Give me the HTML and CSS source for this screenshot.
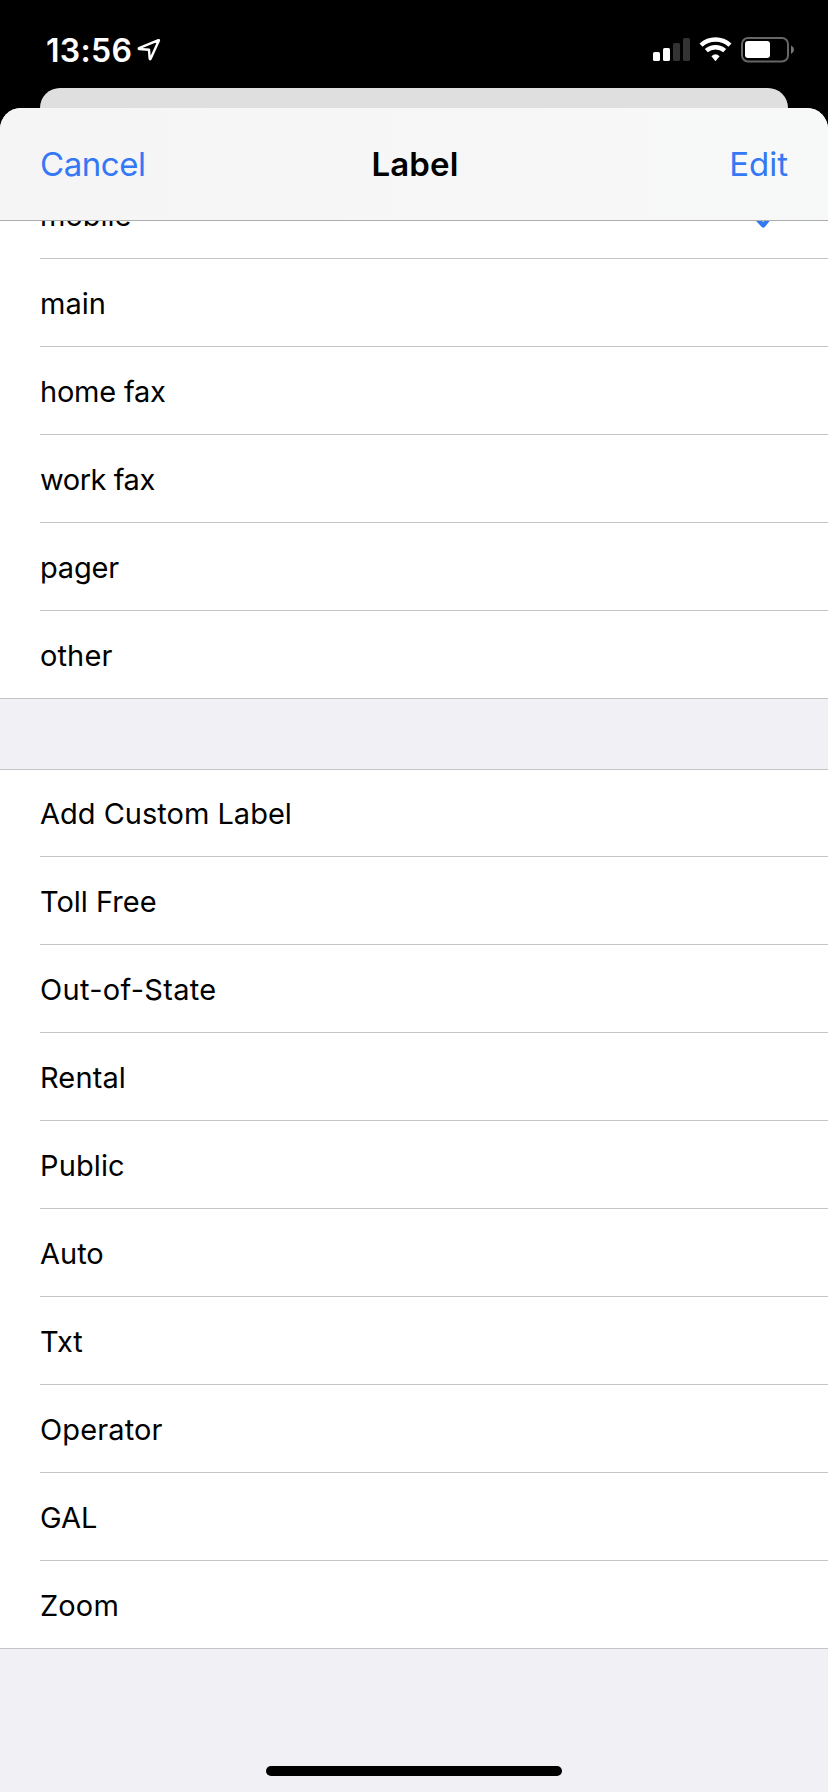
FILE: index.html
```html
<!DOCTYPE html>
<html lang="en">
<head>
<meta charset="utf-8">
<title>Label</title>
<link rel="stylesheet" href="styles.css">
</head>
<body>
<div class="screen">
  <header class="status">
    <div class="status-left">
      <span class="time">13:56</span>
      <svg class="location" width="24" height="24" viewBox="0 0 24 24"><path d="M21.5 2.2 L2 10.2 Q1.3 10.8 2.2 11 L12 11.7 L12.7 20.8 Q13 21.9 13.6 20.8 L21.9 2.6 Q22 2 21.5 2.2Z"/></svg>
    </div>
    <div class="status-right">
      <svg class="signal" width="38" height="24" viewBox="0 0 38 24"><rect x="0" y="14" width="7" height="9" rx="1.6"/><rect x="10" y="10" width="7" height="13" rx="1.6"/><rect class="off" x="20" y="5" width="7" height="18" rx="1.6"/><rect class="off" x="30" y="0" width="7" height="23" rx="1.6"/></svg>
      <svg class="wifi" width="33" height="26" viewBox="0 0 33 26"><path d="M2 8.1 A21.9 21.9 0 0 1 31 8.1" class="arc"/><path d="M7.3 13.6 A14.3 14.3 0 0 1 25.7 13.6" class="arc"/><path class="dot" d="M16.5 24.2 L12.4 19.2 Q16.5 15.4 20.6 19.2Z"/></svg>
      <svg class="battery" width="53" height="26" viewBox="0 0 53 26"><rect class="shell" x="1" y="1" width="46" height="23.5" rx="6"/><rect class="charge" x="4" y="4" width="25" height="17" rx="3"/><path class="cap" d="M50 8.5 Q53 10 53 12.7 Q53 15.4 50 17Z"/></svg>
    </div>
  </header>
  <div class="back-card"></div>
  <main class="sheet">
    <nav class="nav">
      <a class="action cancel">Cancel</a>
      <h1 class="title">Label</h1>
      <a class="action edit">Edit</a>
    </nav>
    <div class="scroller">
      <ul class="group first">
        <li class="row"><span>mobile</span><svg class="check" width="28" height="28" viewBox="0 0 28 28"><path d="M5 11.7 L13.3 20.4 L26 4.7"/></svg></li>
        <li class="row"><span>main</span></li>
        <li class="row snug"><span>home fax</span></li>
        <li class="row tight"><span>work fax</span></li>
        <li class="row snug"><span>pager</span></li>
        <li class="row loose"><span>other</span></li>
      </ul>
      <ul class="group custom">
        <li class="row"><span>Add Custom Label</span></li>
        <li class="row"><span>Toll Free</span></li>
        <li class="row wide"><span>Out-of-State</span></li>
        <li class="row loose"><span>Rental</span></li>
        <li class="row loose"><span>Public</span></li>
        <li class="row"><span>Auto</span></li>
        <li class="row"><span>Txt</span></li>
        <li class="row loose"><span>Operator</span></li>
        <li class="row"><span>GAL</span></li>
        <li class="row loose"><span>Zoom</span></li>
      </ul>
    </div>
    <div class="home"></div>
  </main>
</div>
</body>
</html>
```
FILE: styles.css
```css
* { box-sizing: border-box; margin: 0; padding: 0; }
body { background: #000; font-family: Inter, "Liberation Sans", sans-serif; color: #000; }
.screen { height: 1792px; display: flex; flex-direction: column; overflow: hidden; }

/* Status bar */
.status { height: 88px; padding: 12px 34px 0 46px; display: flex; justify-content: space-between; align-items: center; color: #fff; flex: none; }
.status-left, .status-right { display: flex; align-items: center; }
.status-left { gap: 5px; }
.time { font-size: 32px; font-weight: 600; letter-spacing: 0.3px; }
.location { fill: none; stroke: #fff; stroke-width: 2.4; stroke-linejoin: round; }
.signal { fill: #fff; margin-right: 8px; }
.off { fill: #333; }
.wifi { margin-right: 9px; }
.arc { fill: none; stroke: #fff; stroke-width: 4.5; }
.dot { fill: #fff; }
.shell { fill: none; stroke: #666; stroke-width: 2; }
.charge { fill: #fff; }
.cap { fill: #777; }

/* Sheet */
.back-card { height: 20px; margin: 0 40px; background: #dfdfdf; border-radius: 20px 20px 0 0; flex: none; }
.sheet { flex: 1; min-height: 0; background: #f1f0f5; border-radius: 21px 21px 0 0; overflow: hidden; display: flex; flex-direction: column; }
.nav { flex: none; height: 113px; padding: 0 40px; display: grid; grid-template-columns: 1fr auto 1fr; align-items: center; background: linear-gradient(90deg, #f5f5f5, #f7f7f7 60%, #f7f8f8); border-bottom: 1px solid #adadad; font-size: 33px; }
.action { color: #3478f6; }
.cancel { letter-spacing: -0.45px; }
.edit { text-align: right; }
.title { font-size: 33px; font-weight: 600; letter-spacing: 0.1px; padding-left: 2px; }

/* Lists */
.scroller { flex: 1; min-height: 0; overflow: hidden; }
.group { list-style: none; background: #fff; border-bottom: 1px solid #c4c4c6; padding-left: 40px; }
.first { margin-top: -50px; margin-bottom: 70px; }
.custom { border-top: 1px solid #c4c4c6; }
.row { height: 88px; display: flex; align-items: flex-end; justify-content: space-between; font-size: 29px; line-height: 35px; border-bottom: 1px solid #c4c4c6; padding: 0 50px 25px 0; }
.custom .row:first-child { height: 87px; }
.row:last-child { border-bottom: 0; height: 87px; }
.tight { letter-spacing: -0.45px; }
.snug { letter-spacing: -0.22px; }
.loose { letter-spacing: 0.12px; }
.wide { letter-spacing: 0.3px; }
.check { fill: none; stroke: #3478f6; stroke-width: 4.4; stroke-linejoin: round; }

.home { flex: none; align-self: center; width: 296px; height: 10px; border-radius: 5px; background: #000; margin-bottom: 16px; }
```
